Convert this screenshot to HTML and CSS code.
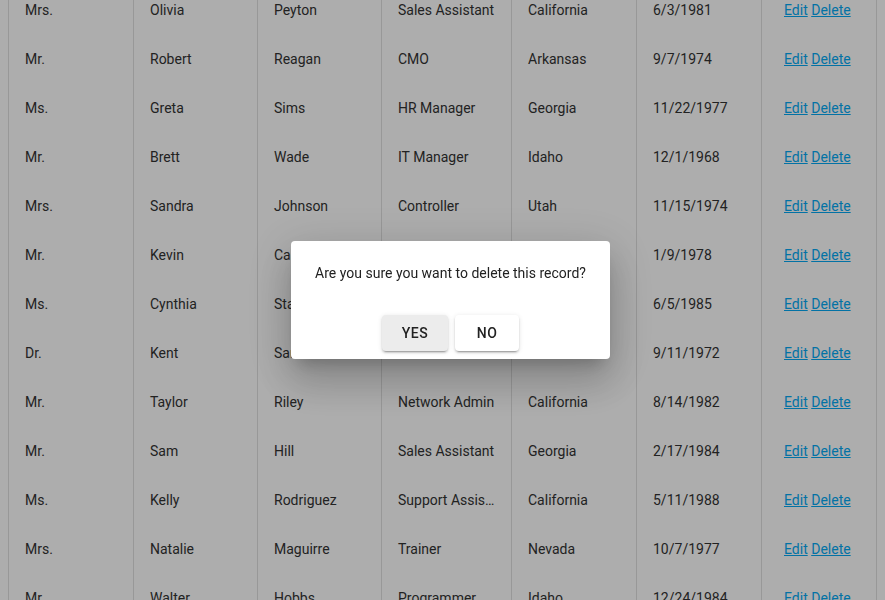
FILE: index.html
```html
<!DOCTYPE html>
<html>
<head>
<meta charset="utf-8">
<link rel="stylesheet" href="styles.css">
</head>
<body>
<div class="grid">
  <div class="row"><div class="c">Mrs.</div><div class="c">Olivia</div><div class="c">Peyton</div><div class="c">Sales Assistant</div><div class="c">California</div><div class="c">6/3/1981</div><div class="c act"><a href="#">Edit</a> <a href="#">Delete</a></div></div>
  <div class="row"><div class="c">Mr.</div><div class="c">Robert</div><div class="c">Reagan</div><div class="c">CMO</div><div class="c">Arkansas</div><div class="c">9/7/1974</div><div class="c act"><a href="#">Edit</a> <a href="#">Delete</a></div></div>
  <div class="row"><div class="c">Ms.</div><div class="c">Greta</div><div class="c">Sims</div><div class="c">HR Manager</div><div class="c">Georgia</div><div class="c">11/22/1977</div><div class="c act"><a href="#">Edit</a> <a href="#">Delete</a></div></div>
  <div class="row"><div class="c">Mr.</div><div class="c">Brett</div><div class="c">Wade</div><div class="c">IT Manager</div><div class="c">Idaho</div><div class="c">12/1/1968</div><div class="c act"><a href="#">Edit</a> <a href="#">Delete</a></div></div>
  <div class="row"><div class="c">Mrs.</div><div class="c">Sandra</div><div class="c">Johnson</div><div class="c">Controller</div><div class="c">Utah</div><div class="c">11/15/1974</div><div class="c act"><a href="#">Edit</a> <a href="#">Delete</a></div></div>
  <div class="row"><div class="c">Mr.</div><div class="c">Kevin</div><div class="c">Carter</div><div class="c">Shipping Manager</div><div class="c">California</div><div class="c">1/9/1978</div><div class="c act"><a href="#">Edit</a> <a href="#">Delete</a></div></div>
  <div class="row"><div class="c">Ms.</div><div class="c">Cynthia</div><div class="c">Stanwick</div><div class="c">HR Assistant</div><div class="c">Arkansas</div><div class="c">6/5/1985</div><div class="c act"><a href="#">Edit</a> <a href="#">Delete</a></div></div>
  <div class="row"><div class="c">Dr.</div><div class="c">Kent</div><div class="c">Samuelson</div><div class="c">Ombudsman</div><div class="c">Missouri</div><div class="c">9/11/1972</div><div class="c act"><a href="#">Edit</a> <a href="#">Delete</a></div></div>
  <div class="row"><div class="c">Mr.</div><div class="c">Taylor</div><div class="c">Riley</div><div class="c">Network Admin</div><div class="c">California</div><div class="c">8/14/1982</div><div class="c act"><a href="#">Edit</a> <a href="#">Delete</a></div></div>
  <div class="row"><div class="c">Mr.</div><div class="c">Sam</div><div class="c">Hill</div><div class="c">Sales Assistant</div><div class="c">Georgia</div><div class="c">2/17/1984</div><div class="c act"><a href="#">Edit</a> <a href="#">Delete</a></div></div>
  <div class="row"><div class="c">Ms.</div><div class="c">Kelly</div><div class="c">Rodriguez</div><div class="c">Support Assistant</div><div class="c">California</div><div class="c">5/11/1988</div><div class="c act"><a href="#">Edit</a> <a href="#">Delete</a></div></div>
  <div class="row"><div class="c">Mrs.</div><div class="c">Natalie</div><div class="c">Maguirre</div><div class="c">Trainer</div><div class="c">Nevada</div><div class="c">10/7/1977</div><div class="c act"><a href="#">Edit</a> <a href="#">Delete</a></div></div>
  <div class="row"><div class="c">Mr.</div><div class="c">Walter</div><div class="c">Hobbs</div><div class="c">Programmer</div><div class="c">Idaho</div><div class="c">12/24/1984</div><div class="c act"><a href="#">Edit</a> <a href="#">Delete</a></div></div>
</div>
<div class="overlay">
  <div class="dialog">
    <div class="msg">Are you sure you want to delete this record?</div>
    <div class="actions">
      <button class="btn btn-yes focused">Yes</button>
      <button class="btn">No</button>
    </div>
  </div>
</div>
</body>
</html>
```

FILE: styles.css
```css
html, body {
  margin: 0;
  padding: 0;
  background: #fff;
  overflow: hidden;
  height: 600px;
}
body {
  padding: 0 8px;
  font-family: Roboto, "Liberation Sans", sans-serif;
  font-size: 14px;
  color: #333;
}
.grid {
  margin-top: -14px;
  width: 869px;
}
.row {
  display: grid;
  grid-template-columns: 125px 124px 124px 130px 125px 125px 116px;
}
.c {
  box-sizing: border-box;
  height: 49px;
  line-height: 49px;
  padding: 0 16px;
  border-left: 1px solid #e0e0e0;
  white-space: nowrap;
  overflow: hidden;
  text-overflow: ellipsis;
}
.c.act {
  border-right: 1px solid #e0e0e0;
  padding: 0 0 0 22px;
}
.act a {
  color: #03a9f4;
  text-decoration: underline;
}
.overlay {
  position: fixed;
  inset: 0;
  background: rgba(0, 0, 0, 0.32);
  display: flex;
  align-items: center;
  justify-content: center;
  padding-left: 16px;
}
.dialog {
  background: #fff;
  border-radius: 4px;
  box-shadow: 0 11px 15px -7px rgba(0,0,0,.2), 0 24px 38px 3px rgba(0,0,0,.14), 0 9px 46px 8px rgba(0,0,0,.12);
}
.msg {
  padding: 22px 24px 32px;
  line-height: 20px;
  color: #222;
}
.actions {
  display: flex;
  justify-content: center;
  gap: 7px;
  padding: 0 8px 8px;
}
.btn {
  font-family: Roboto, "Liberation Sans", sans-serif;
  font-size: 14px;
  font-weight: 500;
  text-transform: uppercase;
  letter-spacing: 0.5px;
  color: #222;
  background: #fff;
  border: none;
  border-radius: 4px;
  height: 36px;
  min-width: 64px;
  padding: 0 16px;
  box-shadow: 0 3px 1px -2px rgba(0,0,0,.2), 0 2px 2px 0 rgba(0,0,0,.14), 0 1px 5px 0 rgba(0,0,0,.12);
}
.btn-yes {
  min-width: 66px;
}
.btn.focused {
  background: #ececec;
}
```
